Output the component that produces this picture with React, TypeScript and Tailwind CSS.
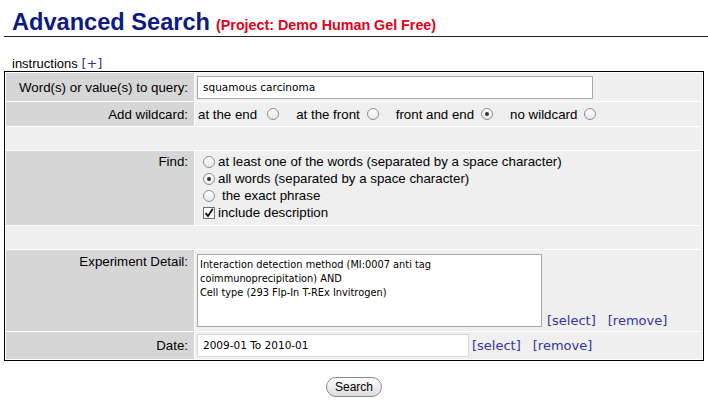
import React from 'react';

const sans = "font-['Liberation_Sans',Arial,sans-serif]";
const verd = "font-['DejaVu_Sans',Verdana,sans-serif]";

const Radio = ({ checked = false, className = '' }: { checked?: boolean; className?: string }) => (
  <span
    className={
      'inline-flex w-[12px] h-[12px] shrink-0 items-center justify-center rounded-full border border-[#8e8e8e] bg-gradient-to-b from-white to-[#e8e8e8] ' +
      className
    }
  >
    {checked && <span className="block w-[4px] h-[4px] rounded-full bg-[#333]" />}
  </span>
);

const Checkbox = () => (
  <span className="inline-flex w-[12px] h-[12px] shrink-0 items-center justify-center border border-[#6f6f6f] bg-white">
    <svg width="10" height="10" viewBox="0 0 10 10">
      <path d="M1.5 5.2 L4 8 L8.8 0.8" fill="none" stroke="#111" strokeWidth="1.8" />
    </svg>
  </span>
);

const Links = ({ gap }: { gap: string }) => (
  <span className={verd + ' text-[13px] leading-[15px] text-[#333399] flex'}>
    <a className="cursor-pointer">[select]</a>
    <a className={'cursor-pointer ' + gap}>[remove]</a>
  </span>
);

export default function App() {
  return (
    <div className={sans + ' w-[708px] h-[401px] bg-white pl-[4px] text-black'}>
      <div className="mt-[8px] flex h-[29px] items-baseline border-b border-[#222] pl-[8px] leading-[28px]">
        <span className="text-[23.6px] font-bold text-[#0d1a82]">Advanced Search</span>
        <span className="ml-[6px] text-[14.3px] leading-[16px] font-bold text-[#e4001a]">(Project: Demo Human Gel Free)</span>
      </div>
      <div className="mt-[19px] pl-[8px] text-[13px] leading-[15px]">
        instructions <a className={verd + ' text-[#333399]'}>[+]</a>
      </div>
      <table className="w-[700px] border border-black border-separate border-spacing-[1px] text-[13.3px] leading-[15px]">
        <tbody>
          <tr>
            <td className="w-[188px] h-[28px] bg-[#d6d6d6] pr-[6px] text-right">Word(s) or value(s) to query:</td>
            <td className="bg-[#efefef] pl-[2px]">
              <div className={verd + ' w-[396px] h-[23px] border border-[#a9a9a9] bg-white pl-[5px] text-[10.5px] leading-[21px]'}>
                squamous carcinoma
              </div>
            </td>
          </tr>
          <tr>
            <td className="h-[24px] bg-[#d6d6d6] pr-[6px] text-right">Add wildcard:</td>
            <td className="bg-[#efefef] pl-[3px]">
              <div className="flex items-center">
                <span>at the end</span>
                <Radio className="ml-[10px]" />
                <span className="ml-[17px]">at the front</span>
                <Radio className="ml-[7px]" />
                <span className="ml-[17px]">front and end</span>
                <Radio checked className="ml-[7px]" />
                <span className="ml-[17px]">no wildcard</span>
                <Radio className="ml-[7px]" />
              </div>
            </td>
          </tr>
          <tr>
            <td colSpan={2} className="h-[23px] bg-[#f0f0f0]" />
          </tr>
          <tr>
            <td className="h-[74px] bg-[#d6d6d6] pr-[6px] pt-[3px] text-right align-top">Find:</td>
            <td className="bg-[#efefef] pl-[8px] pt-[2px] align-top">
              <div className="flex flex-col">
                <div className="flex h-[17px] items-center gap-[3px]">
                  <Radio />
                  <span>at least one of the words (separated by a space character)</span>
                </div>
                <div className="flex h-[17px] items-center gap-[3px]">
                  <Radio checked />
                  <span>all words (separated by a space character)</span>
                </div>
                <div className="flex h-[17px] items-center gap-[7px]">
                  <Radio />
                  <span>the exact phrase</span>
                </div>
                <div className="flex h-[17px] items-center gap-[3px]">
                  <Checkbox />
                  <span>include description</span>
                </div>
              </div>
            </td>
          </tr>
          <tr>
            <td colSpan={2} className="h-[23px] bg-[#f0f0f0]" />
          </tr>
          <tr>
            <td className="h-[81px] bg-[#d6d6d6] pr-[6px] pt-[4px] text-right align-top">Experiment Detail:</td>
            <td className="bg-[#efefef] pl-[2px] pt-[4px] align-top">
              <div className="flex items-end">
                <div className={verd + ' w-[345px] h-[73px] border border-[#a9a9a9] bg-white px-[2px] pt-[3px] text-[9.8px] leading-[14px]'}>
                  <div>Interaction detection method (MI:0007 anti tag</div>
                  <div>coimmunoprecipitation) AND</div>
                  <div>Cell type (293 Flp-In T-REx Invitrogen)</div>
                </div>
                <span className="ml-[5px] mb-[-1px]">
                  <Links gap="ml-[12px]" />
                </span>
              </div>
            </td>
          </tr>
          <tr>
            <td className="h-[27px] bg-[#d6d6d6] pr-[6px] text-right">Date:</td>
            <td className="bg-[#efefef] pl-[2px]">
              <div className="flex items-center">
                <div className={verd + ' w-[272px] h-[23px] border border-[#d9d9d9] bg-white pl-[5px] text-[10.5px] leading-[21px]'}>
                  2009-01 To 2010-01
                </div>
                <span className="ml-[3px]">
                  <Links gap="ml-[12px]" />
                </span>
              </div>
            </td>
          </tr>
        </tbody>
      </table>
      <div className="mt-[16px] flex justify-center pr-[4px]">
        <button className="h-[20px] w-[56px] rounded-full border border-[#8a8a8a] bg-gradient-to-b from-white to-[#dcdcdc] text-[12px] leading-[18px] text-black">
          Search
        </button>
      </div>
    </div>
  );
}
